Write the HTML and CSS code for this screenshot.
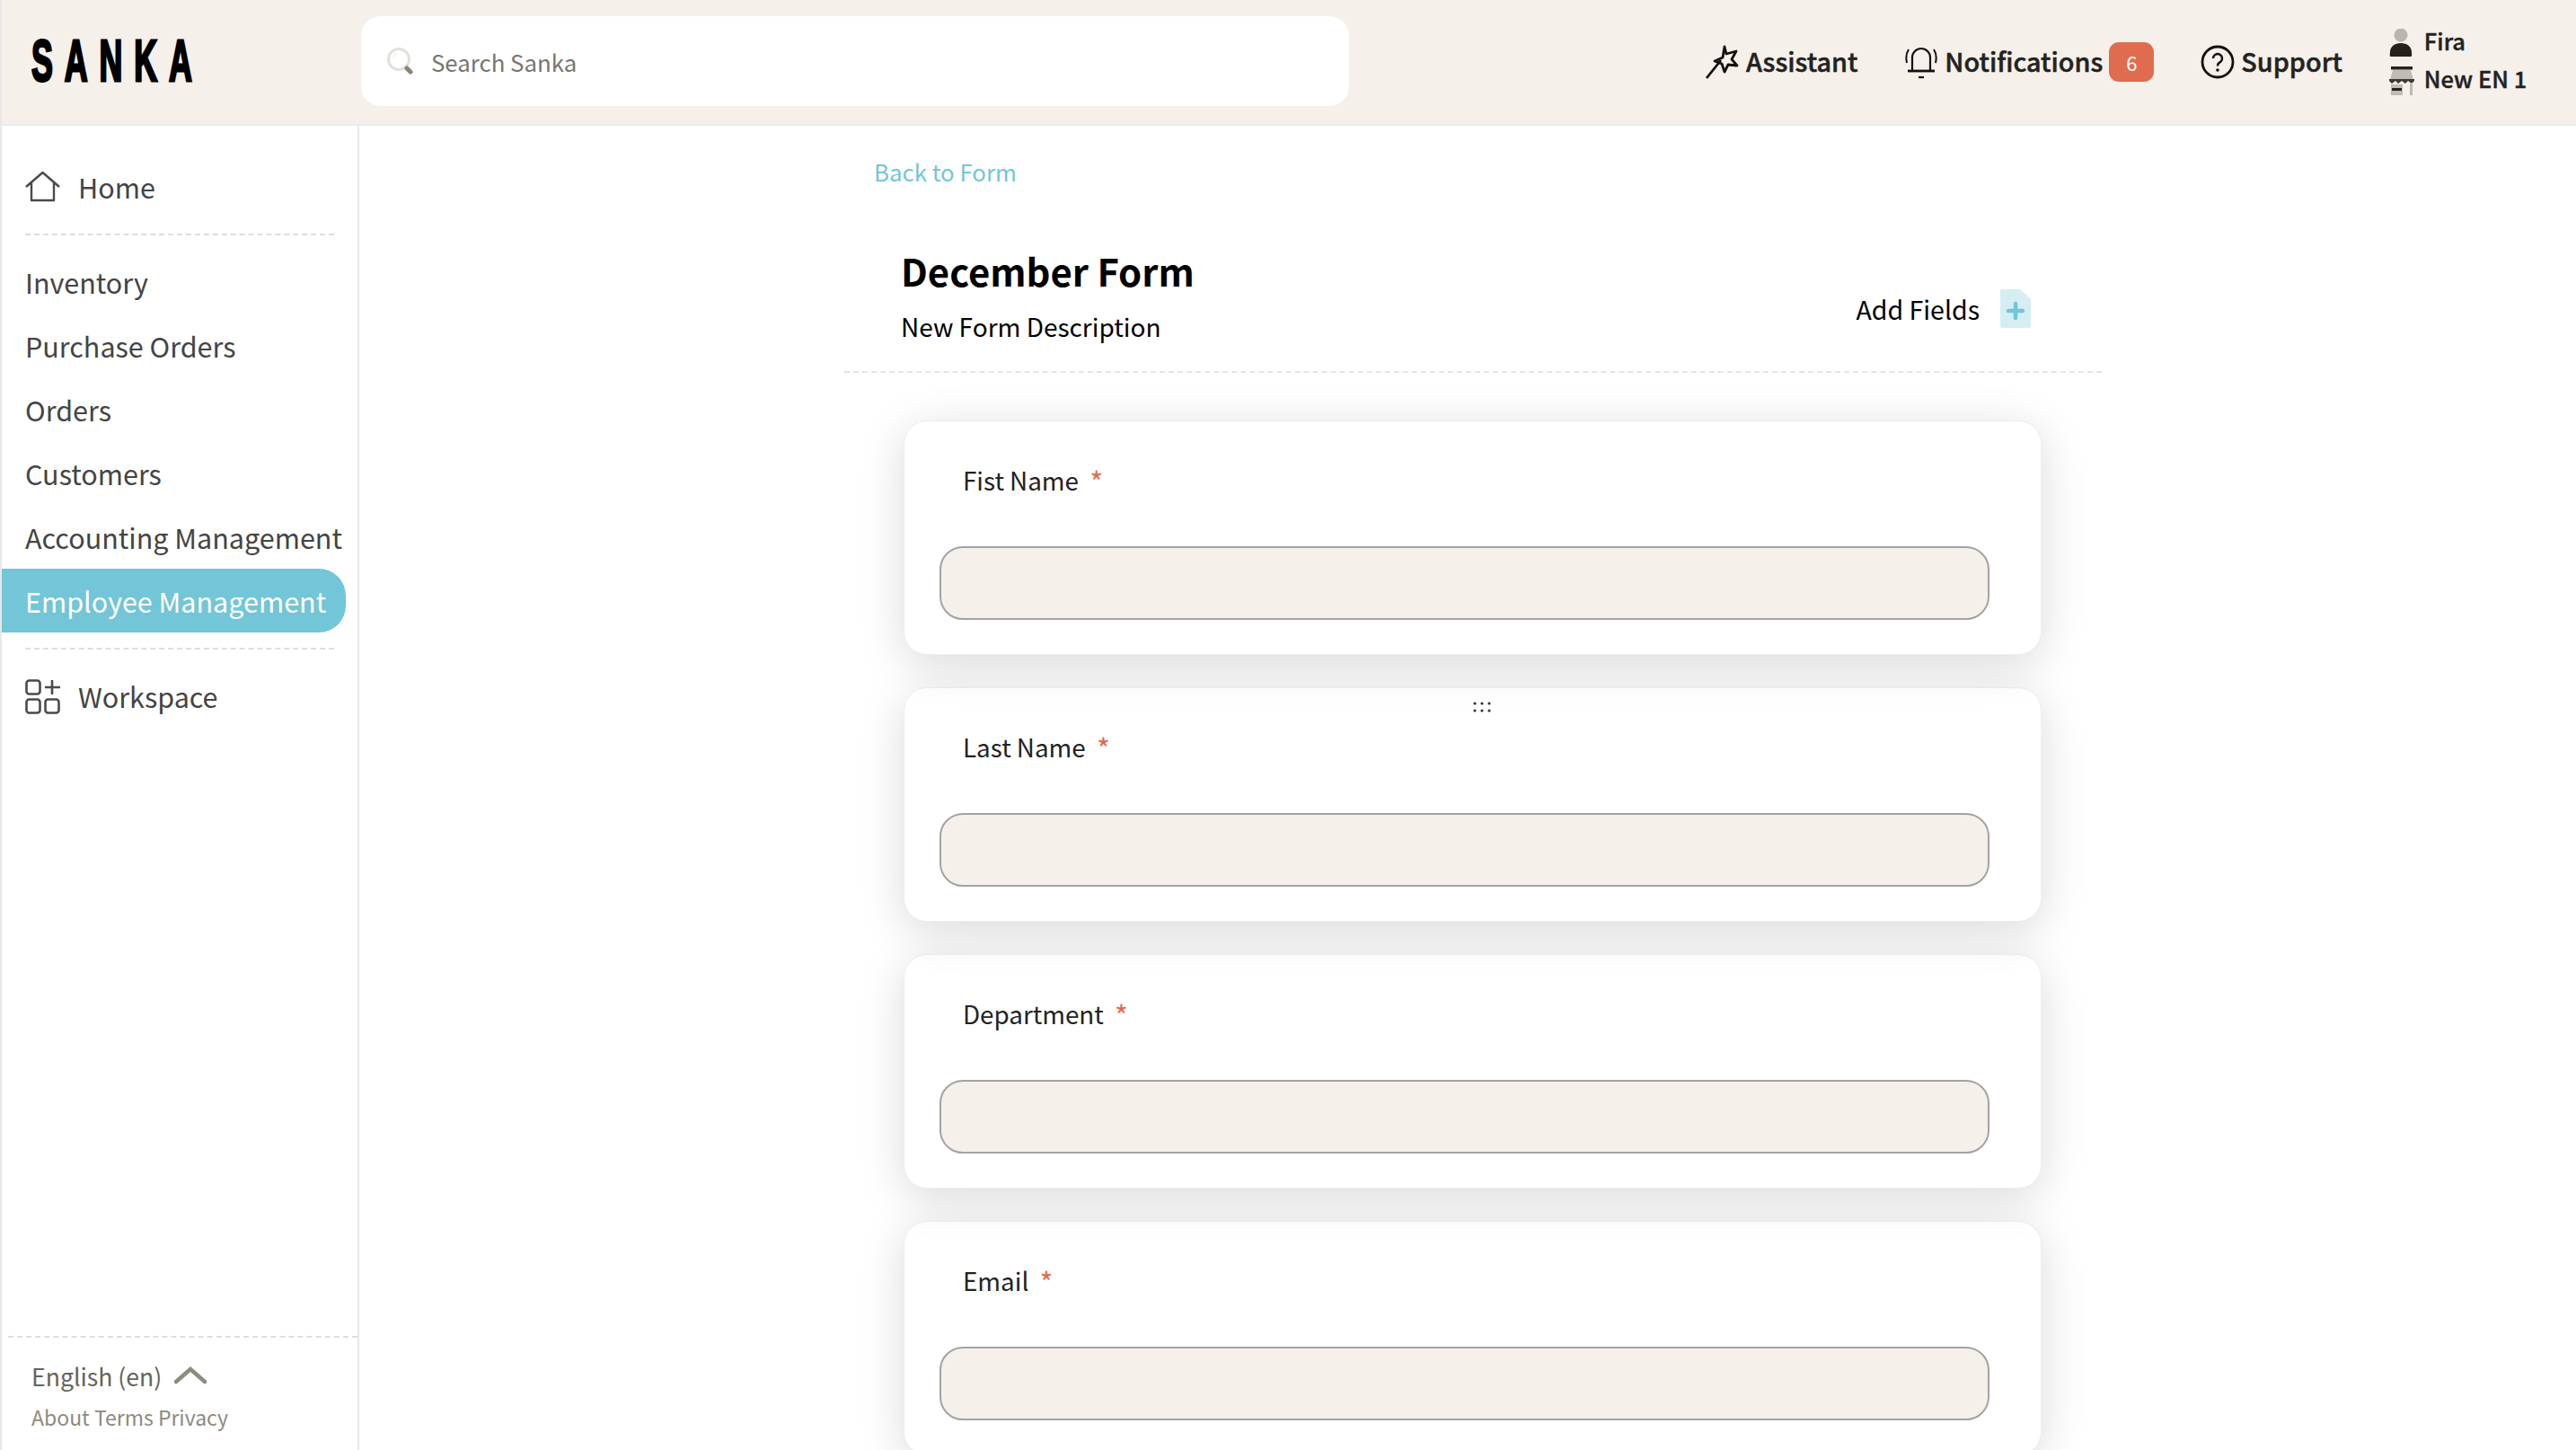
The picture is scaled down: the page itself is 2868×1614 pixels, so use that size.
FILE: index.html
```html
<!DOCTYPE html>
<html lang="en">
<head>
<meta charset="utf-8">
<title>Sanka</title>
<link rel="stylesheet" href="styles.css">
</head>
<body>
<header class="topbar">
  <div class="brand"><span class="logo">SANKA</span></div>
  <div class="search">
    <svg class="search-icon" viewBox="0 0 30 30"><circle cx="13" cy="13" r="11.5" fill="none" stroke="#e2e0da" stroke-width="3"/><path d="M10 6a8 8 0 0 0-3 5" fill="none" stroke="#ecebe6" stroke-width="1.5"/><path d="M22 23l4 4" stroke="#8c8374" stroke-width="5" stroke-linecap="round"/></svg>
    <span class="search-text">Search Sanka</span>
  </div>
  <nav class="actions">
    <a class="action act-assistant">
      <svg class="ico" viewBox="0 0 38 38"><path d="M1 37L17 17" fill="none" stroke="#111" stroke-width="2.8"/><path d="M21 2l2 8 11-3-5 9 6 7-10-1-4 8-3-9-8-3 9-4z" fill="none" stroke="#111" stroke-width="2.8" stroke-linejoin="round"/></svg>
      <span class="action-text">Assistant</span>
    </a>
    <a class="action act-notif">
      <svg class="ico" viewBox="0 0 38 38"><path d="M9 28V14a10 10 0 0 1 20 0v14" fill="none" stroke="#111" stroke-width="2.200"/><path d="M4 29h30" stroke="#111" stroke-width="2.800"/><path d="M16 36h6" stroke="#111" stroke-width="2.200"/><path d="M5 5q-4 6-2 15M33 5q4 6 2 15" fill="none" stroke="#111" stroke-width="2"/></svg>
      <span class="action-text">Notifications</span>
      <b class="badge">6</b>
    </a>
    <a class="action act-support">
      <svg class="ico" viewBox="0 0 38 38"><circle cx="19" cy="19" r="17" fill="none" stroke="#111" stroke-width="2.800"/><path d="M14 15a5 5 0 1 1 7.500 4.400c-1.800 1-2.500 2-2.500 4" fill="none" stroke="#111" stroke-width="2.400"/><circle cx="19" cy="28" r="1.800" fill="#111"/></svg>
      <span class="action-text">Support</span>
    </a>
    <div class="account">
      <div class="acc-row">
        <svg class="acc-icon" viewBox="0 0 30 32"><ellipse cx="14" cy="7" rx="7.500" ry="7.500" fill="#b9b6ae"/><path d="M3 31c-2 0-1-3-1-5 0-6 5-10 12-10s12 4 12 10c0 2 1 5-1 5z" fill="#23221e"/></svg>
        <span>Fira</span>
      </div>
      <div class="acc-row">
        <svg class="acc-icon" viewBox="0 0 30 32"><rect x="3" y="0" width="24" height="3.500" fill="#23221e"/><path d="M5 4h20l3 11H2z" fill="#bfbcb3"/><path d="M1 14h28v2l-3 3-4-3-3 3-4-3-4 3-3-3-4 3-3-3z" fill="#3b3a35"/><rect x="3" y="20" width="13" height="12" fill="#bfbcb3"/><rect x="24" y="18" width="3" height="14" fill="#bfbcb3"/><rect x="4" y="24" width="11" height="3" fill="#23221e"/></svg>
        <span>New EN 1</span>
      </div>
    </div>
  </nav>
</header>
<div class="layout">
  <aside class="sidebar">
    <a class="nav-main nav-home">
      <svg class="nav-icon home-icon" viewBox="0 0 39 34"><path d="M1 17L19.500 1 38 17M7 11v21h25V11" fill="none" stroke="#4a4a4a" stroke-width="2.400" stroke-linejoin="round"/></svg>
      <span>Home</span>
    </a>
    <hr class="side-rule">
    <ul class="nav-list">
      <li class="nav-item">Inventory</li>
      <li class="nav-item">Purchase Orders</li>
      <li class="nav-item">Orders</li>
      <li class="nav-item">Customers</li>
      <li class="nav-item">Accounting Management</li>
      <li class="nav-item is-active">Employee Management</li>
    </ul>
    <hr class="side-rule rule-after">
    <a class="nav-main nav-work">
      <svg class="nav-icon" viewBox="0 0 39 39"><g fill="none" stroke="#4a4a4a" stroke-width="2.600"><rect x="1.500" y="1.500" width="15" height="15" rx="3"/><rect x="1.500" y="22.500" width="15" height="15" rx="3"/><rect x="22.500" y="22.500" width="15" height="15" rx="3"/><path d="M22 9h17M30 1v16"/></g></svg>
      <span>Workspace</span>
    </a>
    <footer class="side-foot">
      <div class="lang"><span>English (en)</span>
        <svg class="chev" viewBox="0 0 36 20"><path d="M2 17L18 3l16 14" fill="none" stroke="#8e8a7d" stroke-width="4.500" stroke-linecap="round"/></svg>
      </div>
      <div class="legal">About Terms Privacy</div>
    </footer>
  </aside>
  <main class="main">
    <div class="column">
      <a class="back">Back to Form</a>
      <div class="form-head">
        <div>
          <h1 class="title">December Form</h1>
          <p class="desc">New Form Description</p>
        </div>
        <div class="add-fields">
          <span>Add Fields</span>
          <svg class="add-icon" viewBox="0 0 34 43"><path d="M2 0h20l12 11v30a2 2 0 0 1-2 2H2a2 2 0 0 1-2-2V2a2 2 0 0 1 2-2z" fill="#d5eef4"/><path d="M9 24h16M17 16v16" stroke="#73c5d8" stroke-width="4.500" stroke-linecap="round"/></svg>
        </div>
      </div>
      <div class="cards">
        <section class="card">
          <label class="field-label">Fist Name <i class="req">*</i></label>
          <div class="field-box"></div>
        </section>
        <section class="card">
          <svg class="drag" viewBox="0 0 20 12"><g fill="#333"><circle cx="2" cy="2" r="1.600"/><circle cx="10" cy="2" r="1.600"/><circle cx="18" cy="2" r="1.600"/><circle cx="2" cy="10" r="1.600"/><circle cx="10" cy="10" r="1.600"/><circle cx="18" cy="10" r="1.600"/></g></svg>
          <label class="field-label">Last Name <i class="req">*</i></label>
          <div class="field-box"></div>
        </section>
        <section class="card">
          <label class="field-label">Department <i class="req">*</i></label>
          <div class="field-box"></div>
        </section>
        <section class="card">
          <label class="field-label">Email <i class="req">*</i></label>
          <div class="field-box"></div>
        </section>
      </div>
    </div>
  </main>
</div>
</body>
</html>
```
FILE: styles.css
```css
* { box-sizing: border-box; }
html, body { margin: 0; height: 100%; }
body {
  width: 2868px;
  height: 1614px;
  overflow: hidden;
  background: #e8e8e8;
  padding-left: 2px;
  font-family: "Noto Sans CJK JP", "Noto Sans", sans-serif;
  color: #23221e;
  display: flex;
  flex-direction: column;
}
.topbar {
  height: 140px;
  flex: none;
  display: flex;
  align-items: center;
  background: #f5f0ea;
  border-bottom: 2px solid #ebebeb;
}
.brand { width: 400px; flex: none; padding-left: 33px; padding-bottom: 2px; }
.logo {
  display: inline-block;
  font-family: "Liberation Sans Narrow", "Liberation Sans", sans-serif;
  font-weight: 700;
  font-size: 64px;
  line-height: 1;
  letter-spacing: 23px;
  color: #000;
  -webkit-text-stroke: 3px #000;
  transform: scaleX(.56);
  transform-origin: left center;
}
.search {
  width: 1100px;
  height: 100px;
  flex: none;
  margin-bottom: 2px;
  background: #fff;
  border-radius: 22px;
  display: flex;
  align-items: center;
  padding-left: 29px;
  gap: 19px;
}
.search-icon { width: 30px; height: 30px; }
.search-text { font-size: 25.800px; color: #777570; }
.actions {
  display: flex;
  align-items: center;
  margin-left: 397px;
  font-size: 28.800px;
  font-weight: 500;
}
.action { display: flex; align-items: center; gap: 7px; }
.action-text { margin-bottom: 4px; -webkit-text-stroke: .5px #23221e; }
.act-notif { margin-left: 52px; }
.act-support { margin-left: 52px; }
.ico { width: 38px; height: 38px; flex: none; }
.badge {
  width: 50px;
  height: 44px;
  border-radius: 11px;
  background: #e06c4f;
  color: #fff;
  font-size: 22px;
  font-weight: 400;
  display: flex;
  align-items: center;
  justify-content: center;
}
.account { margin: 0 0 8px 51px; font-size: 25.500px; display: flex; flex-direction: column; gap: 8px; -webkit-text-stroke: .4px #23221e; }
.acc-row { display: flex; align-items: center; gap: 10px; height: 34px; }
.acc-icon { width: 30px; height: 32px; flex: none; margin-top: 8px; }

.layout { flex: 1; display: flex; min-height: 0; background: #fff; }
.sidebar {
  width: 398px;
  flex: none;
  border-right: 2px solid #e8e8e8;
  background: #fff;
  display: flex;
  flex-direction: column;
  font-size: 30.500px;
  color: #444;
}
.nav-main { display: flex; align-items: center; gap: 20px; padding-left: 26px; }
.nav-home { height: 34px; margin-top: 51px; }
.nav-work { height: 40px; margin-top: 32px; }
.nav-icon { width: 39px; height: 39px; flex: none; }
.home-icon { height: 34px; }
.side-rule {
  border: 0;
  border-top: 2px dashed #dedede;
  margin: 35px 26px 0 26px;
  width: 344px;
  flex: none;
}
.rule-after { margin-top: 17px; }
.nav-list { list-style: none; margin: 0; padding: 0; margin-top: 16px; }
.nav-item {
  height: 71px;
  padding-left: 26px;
  display: flex;
  align-items: center;
  white-space: nowrap;
}
.is-active {
  width: 383px;
  background: #73c5d8;
  color: #fff;
  border-radius: 0 30px 30px 0;
}
.side-foot {
  margin-top: auto;
  margin-left: 7px;
  margin-right: 0;
  border-top: 2px dashed #dedede;
  padding: 19px 0 0 26px;
  height: 127px;
}
.lang { display: flex; align-items: center; gap: 14px; font-size: 26.600px; color: #66635b; height: 46px; }
.chev { width: 36px; height: 20px; }
.legal { font-size: 23px; color: #8e8a7d; margin-top: 6px; }

.main { flex: 1; min-width: 0; overflow: hidden; background: #fff; }
.column { width: 1400px; margin-left: 540px; }
.back { display: block; margin: 29px 0 0 33px; font-size: 25.800px; line-height: 44px; color: #73c5d8; }
.form-head {
  display: flex;
  justify-content: space-between;
  align-items: flex-start;
  margin-top: 57px;
  padding: 1px 79px 0 63px;
  height: 145px;
  border-bottom: 2px dashed #e8e4da;
}
.title { margin: 0; font-size: 41.800px; font-weight: 700; line-height: 60px; color: #000; }
.desc { margin: 0; font-size: 28px; line-height: 44px; color: #000; padding-top: 10px; }
.add-fields { display: flex; align-items: center; gap: 23px; font-size: 28.500px; color: #000; margin-top: 51px; }
.add-icon { width: 34px; height: 43px; }

.cards { margin: 53px 0 0 66px; width: 1267px; display: flex; flex-direction: column; gap: 36px; }
.card {
  position: relative;
  height: 261px;
  flex: none;
  background: #fff;
  border: 1px solid #eeeeee;
  border-radius: 26px;
  box-shadow: 0 10px 50px rgba(0,0,0,.15);
  padding: 44px 57px 0 39px;
}
.card:nth-child(1) { z-index: 4; }
.card:nth-child(2) { z-index: 3; }
.card:nth-child(3) { z-index: 2; }
.card:nth-child(4) { z-index: 1; }
.field-label { display: block; padding-left: 26px; font-size: 27.800px; line-height: 42px; color: #23221e; }
.req { font-style: normal; font-size: 32px; line-height: 1; color: #e06c4f; margin-left: 6px; position: relative; top: 3px; }
.field-box {
  height: 82px;
  margin-top: 53px;
  background: #f5f0ea;
  border: 2px solid #a3a3a3;
  border-radius: 26px;
}
.drag { position: absolute; left: 633px; top: 15px; width: 20px; height: 12px; }
```
